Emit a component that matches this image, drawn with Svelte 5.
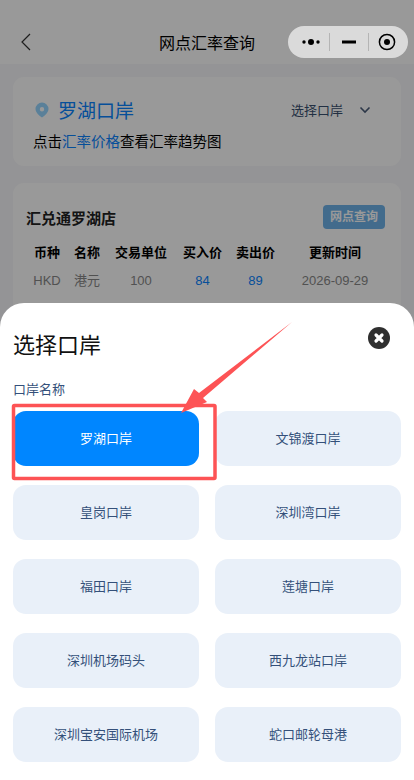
<script>
  const ports = ['罗湖口岸','文锦渡口岸','皇岗口岸','深圳湾口岸','福田口岸','莲塘口岸','深圳机场码头','西九龙站口岸','深圳宝安国际机场','蛇口邮轮母港'];
  const cols = ['币种','名称','交易单位','买入价','卖出价','更新时间'];
  const vals = ['HKD','港元','100','84','89','2026-09-29'];
</script>

<div class="page">
  <header class="nav">
    <svg class="back" width="12" height="18" viewBox="0 0 12 18"><path d="M10 1 2 9l8 8" fill="none" stroke="#333" stroke-width="1.2"/></svg>
    <span class="nav-title">网点汇率查询</span>
  </header>

  <section class="card top">
    <div class="row1">
      <svg class="pin" width="14" height="16" viewBox="0 0 14 16"><path fill-rule="evenodd" d="M7 .5a6.500 6.500 0 0 1 6.500 6.500c0 3.600-3.900 6.800-6.500 8.500C4.400 13.800.5 10.600.5 7A6.500 6.500 0 0 1 7 .5Zm0 4.500a2.200 2.200 0 1 0 0 4.400 2.200 2.200 0 0 0 0-4.400Z" fill="#96d6ff"/></svg>
      <span class="port">罗湖口岸</span>
      <span class="choose">选择口岸</span>
      <svg class="chev" width="12" height="8" viewBox="0 0 12 8"><path d="M1.500 1.500 6 6l4.500-4.500" fill="none" stroke="#4a5c78" stroke-width="1.600"/></svg>
    </div>
    <p class="hint">点击<span>汇率价格</span>查看汇率趋势图</p>
  </section>

  <section class="card shop">
    <div class="shop-head">
      <strong>汇兑通罗湖店</strong>
      <span class="query">网点查询</span>
    </div>
    <div class="table">
      {#each cols as c}<b>{c}</b>{/each}
      {#each vals as v, i}<span class:blue={i === 3 || i === 4}>{v}</span>{/each}
    </div>
  </section>

  <div class="mask"></div>

  <div class="capsule">
    <svg width="18" height="8" viewBox="0 0 18 8"><circle cx="2" cy="4" r="1.700"/><circle cx="9" cy="4" r="3"/><circle cx="16" cy="4" r="1.700"/></svg>
    <i class="sep first"></i>
    <svg width="14" height="4" viewBox="0 0 14 4"><rect width="14" height="3" y=".5"/></svg>
    <i class="sep second"></i>
    <svg width="18" height="18" viewBox="0 0 18 18"><circle cx="9" cy="9" r="7.600" fill="none" stroke="#000" stroke-width="1.500"/><circle cx="9" cy="9" r="3"/></svg>
  </div>

  <div class="sheet">
    <div class="sheet-head">
      <h2>选择口岸</h2>
      <svg class="close" width="22" height="22" viewBox="0 0 22 22"><circle cx="11" cy="11" r="11" fill="#2f2f2f"/><path d="M8 8l6 6m0-6-6 6" stroke="#fff" stroke-width="3.200" stroke-linecap="round"/></svg>
    </div>
    <div class="label">口岸名称</div>
    <div class="grid">
      {#each ports as p, i}
        <div class="item" class:active={i === 0}>{p}</div>
      {/each}
    </div>
  </div>

  <svg class="note" width="414" height="780" viewBox="0 0 414 780">
    <rect x="13.500" y="405.500" width="201.500" height="73" fill="none" stroke="#fd5355" stroke-width="3.500" rx="1"/>
    <path d="M292 322 199 393 194 389 181 413 207 402 203 398Z" fill="#fd5355"/>
  </svg>
</div>

<style>
  :global(body) { margin: 0; background: #f7f7fa; }
  .page {
    position: relative;
    width: 414px;
    height: 780px;
    overflow: hidden;
    background: #f7f7fa;
    font-family: "Liberation Sans", "Noto Sans CJK SC", sans-serif;
  }
  .nav {
    height: 64px;
    background: #fff;
    position: relative;
    display: flex;
    align-items: center;
    justify-content: center;
    box-sizing: border-box;
    padding-top: 20px;
  }
  .back { position: absolute; left: 20px; top: 33px; }
  .nav-title { font-size: 16px; color: #000; }
  .capsule {
    position: absolute;
    left: 288px;
    top: 26px;
    width: 120px;
    height: 32px;
    box-sizing: border-box;
    border-radius: 16px;
    background: #dadada;
    display: flex;
    align-items: center;
    padding-left: 14px;
  }
  .sep { width: 1px; height: 18px; background: #b4b4b4; }
  .sep.first { margin: 0 12px 0 9px; }
  .sep.second { margin: 0 9px 0 12px; }
  .card {
    background: #fff;
    margin: 0 13px;
    border-radius: 11px;
  }
  .top {
    margin-top: 13px;
    height: 89px;
    box-sizing: border-box;
    padding: 19px 20px 0;
  }
  .row1 { display: flex; align-items: center; height: 27px; }
  .pin { margin: 1px 0 0 2px; }
  .port { font-size: 19px; color: #0a84ff; margin-left: 9px; flex: 1; }
  .choose { font-size: 13px; color: #3a5070; }
  .chev { margin-left: 16px; margin-right: 10px; }
  .hint { margin: 9px 0 0 0; font-size: 14.500px; line-height: 20px; color: #000; }
  .hint span { color: #0a84ff; }
  .shop {
    margin-top: 17px;
    height: 200px;
    box-sizing: border-box;
    padding: 22px 16px 0 13px;
  }
  .shop-head { display: flex; align-items: center; justify-content: space-between; height: 24px; }
  .shop-head strong { font-size: 15px; color: #222; }
  .query {
    width: 62px;
    height: 24px;
    border-radius: 4px;
    background: #6eb2e9;
    color: #fff;
    font-size: 12px;
    font-weight: 700;
    line-height: 24px;
    text-align: center;
  }
  .table {
    display: grid;
    grid-template-columns: 42px 38px 70px 53px 53px 106px;
    margin: 14px 0 0 0;
    font-size: 13px;
    text-align: center;
    row-gap: 8px;
    line-height: 20px;
  }
  .table b { color: #000; font-weight: 700; }
  .table span { color: #888; }
  .table .blue { color: #0a84ff; }
  .mask { position: absolute; inset: 0; background: rgba(0,0,0,.4); }
  .sheet {
    position: absolute;
    left: 0; right: 0; top: 303px; bottom: 0;
    background: #fff;
    border-radius: 24px 24px 0 0;
    padding: 0 13px;
  }
  .sheet-head { display: flex; justify-content: space-between; align-items: flex-start; padding-top: 26px; }
  h2 { margin: 0; font-size: 22px; line-height: 34px; font-weight: 400; color: #111; }
  .close { margin: -2px 11px 0 0; }
  .label { margin-top: 18px; font-size: 13px; line-height: 18px; color: #34507a; }
  .grid {
    display: grid;
    grid-template-columns: 186px 186px;
    column-gap: 16px;
    row-gap: 19px;
    margin-top: 12px;
  }
  .item {
    height: 55px;
    box-sizing: border-box;
    padding-bottom: 2px;
    border-radius: 13px;
    background: #e9f0f9;
    color: #34507a;
    font-size: 13px;
    display: flex;
    align-items: center;
    justify-content: center;
  }
  .item.active { background: #0086ff; color: #fff; }
  .note { position: absolute; inset: 0; pointer-events: none; }
</style>
